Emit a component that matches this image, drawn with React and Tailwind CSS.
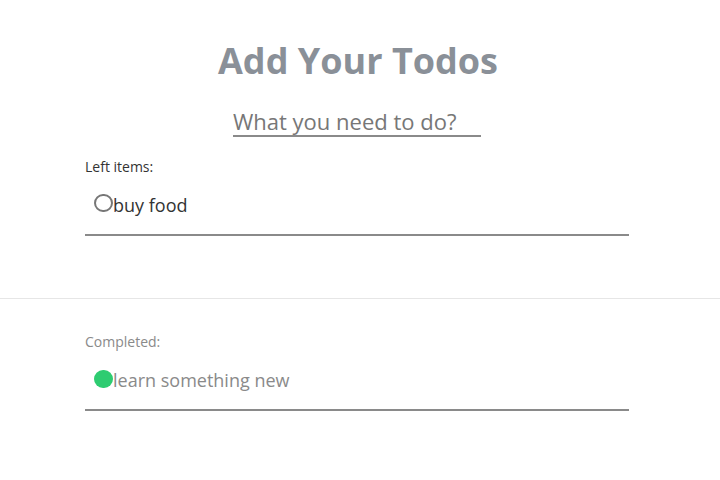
import React, { useState } from "react";

function TodoRow({ text, done }) {
  return (
    <div className="flex items-center h-[59px] border-b-2 border-[#8a8a8a] pl-[9px]">
      {done ? (
        <span className="w-[19px] h-[18px] rounded-full bg-[#2ecc71] -mt-[4px]" />
      ) : (
        <span className="w-[19px] h-[18px] rounded-full border-2 border-[#777] -mt-[6px]" />
      )}
      <span className={"text-[18px] " + (done ? "text-[#8a8a8a]" : "text-[#333]")}>{text}</span>
    </div>
  );
}

export default function App() {
  const [todo, setTodo] = useState("");
  return (
    <div className="w-[720px] h-[480px] bg-white font-['Open_Sans',sans-serif] overflow-hidden">
      <div className="flex flex-col items-center pt-[37px]">
        <h1 className="text-[36px] font-bold text-[#8a9098] leading-[48px] ml-[-4px]">Add Your Todos</h1>
        <input
          className="mt-[22px] mr-[6px] w-[248px] border-b-2 border-[#8a8a8a] text-[22px] text-[#666] placeholder:text-[#777] outline-none leading-[28px]"
          placeholder="What you need to do?"
          value={todo}
          onChange={(e) => setTodo(e.target.value)}
        />
      </div>
      <div className="pl-[85px] w-[629px]">
        <p className="mt-[19px] text-[14px] text-[#333]">Left items:</p>
        <TodoRow text="buy food" />
      </div>
      <div className="mt-[62px] border-t border-[#e6e6e6]" />
      <div className="pl-[85px] w-[629px]">
        <p className="mt-[32px] text-[14px] text-[#8a8a8a]">Completed:</p>
        <TodoRow text="learn something new" done />
      </div>
    </div>
  );
}
